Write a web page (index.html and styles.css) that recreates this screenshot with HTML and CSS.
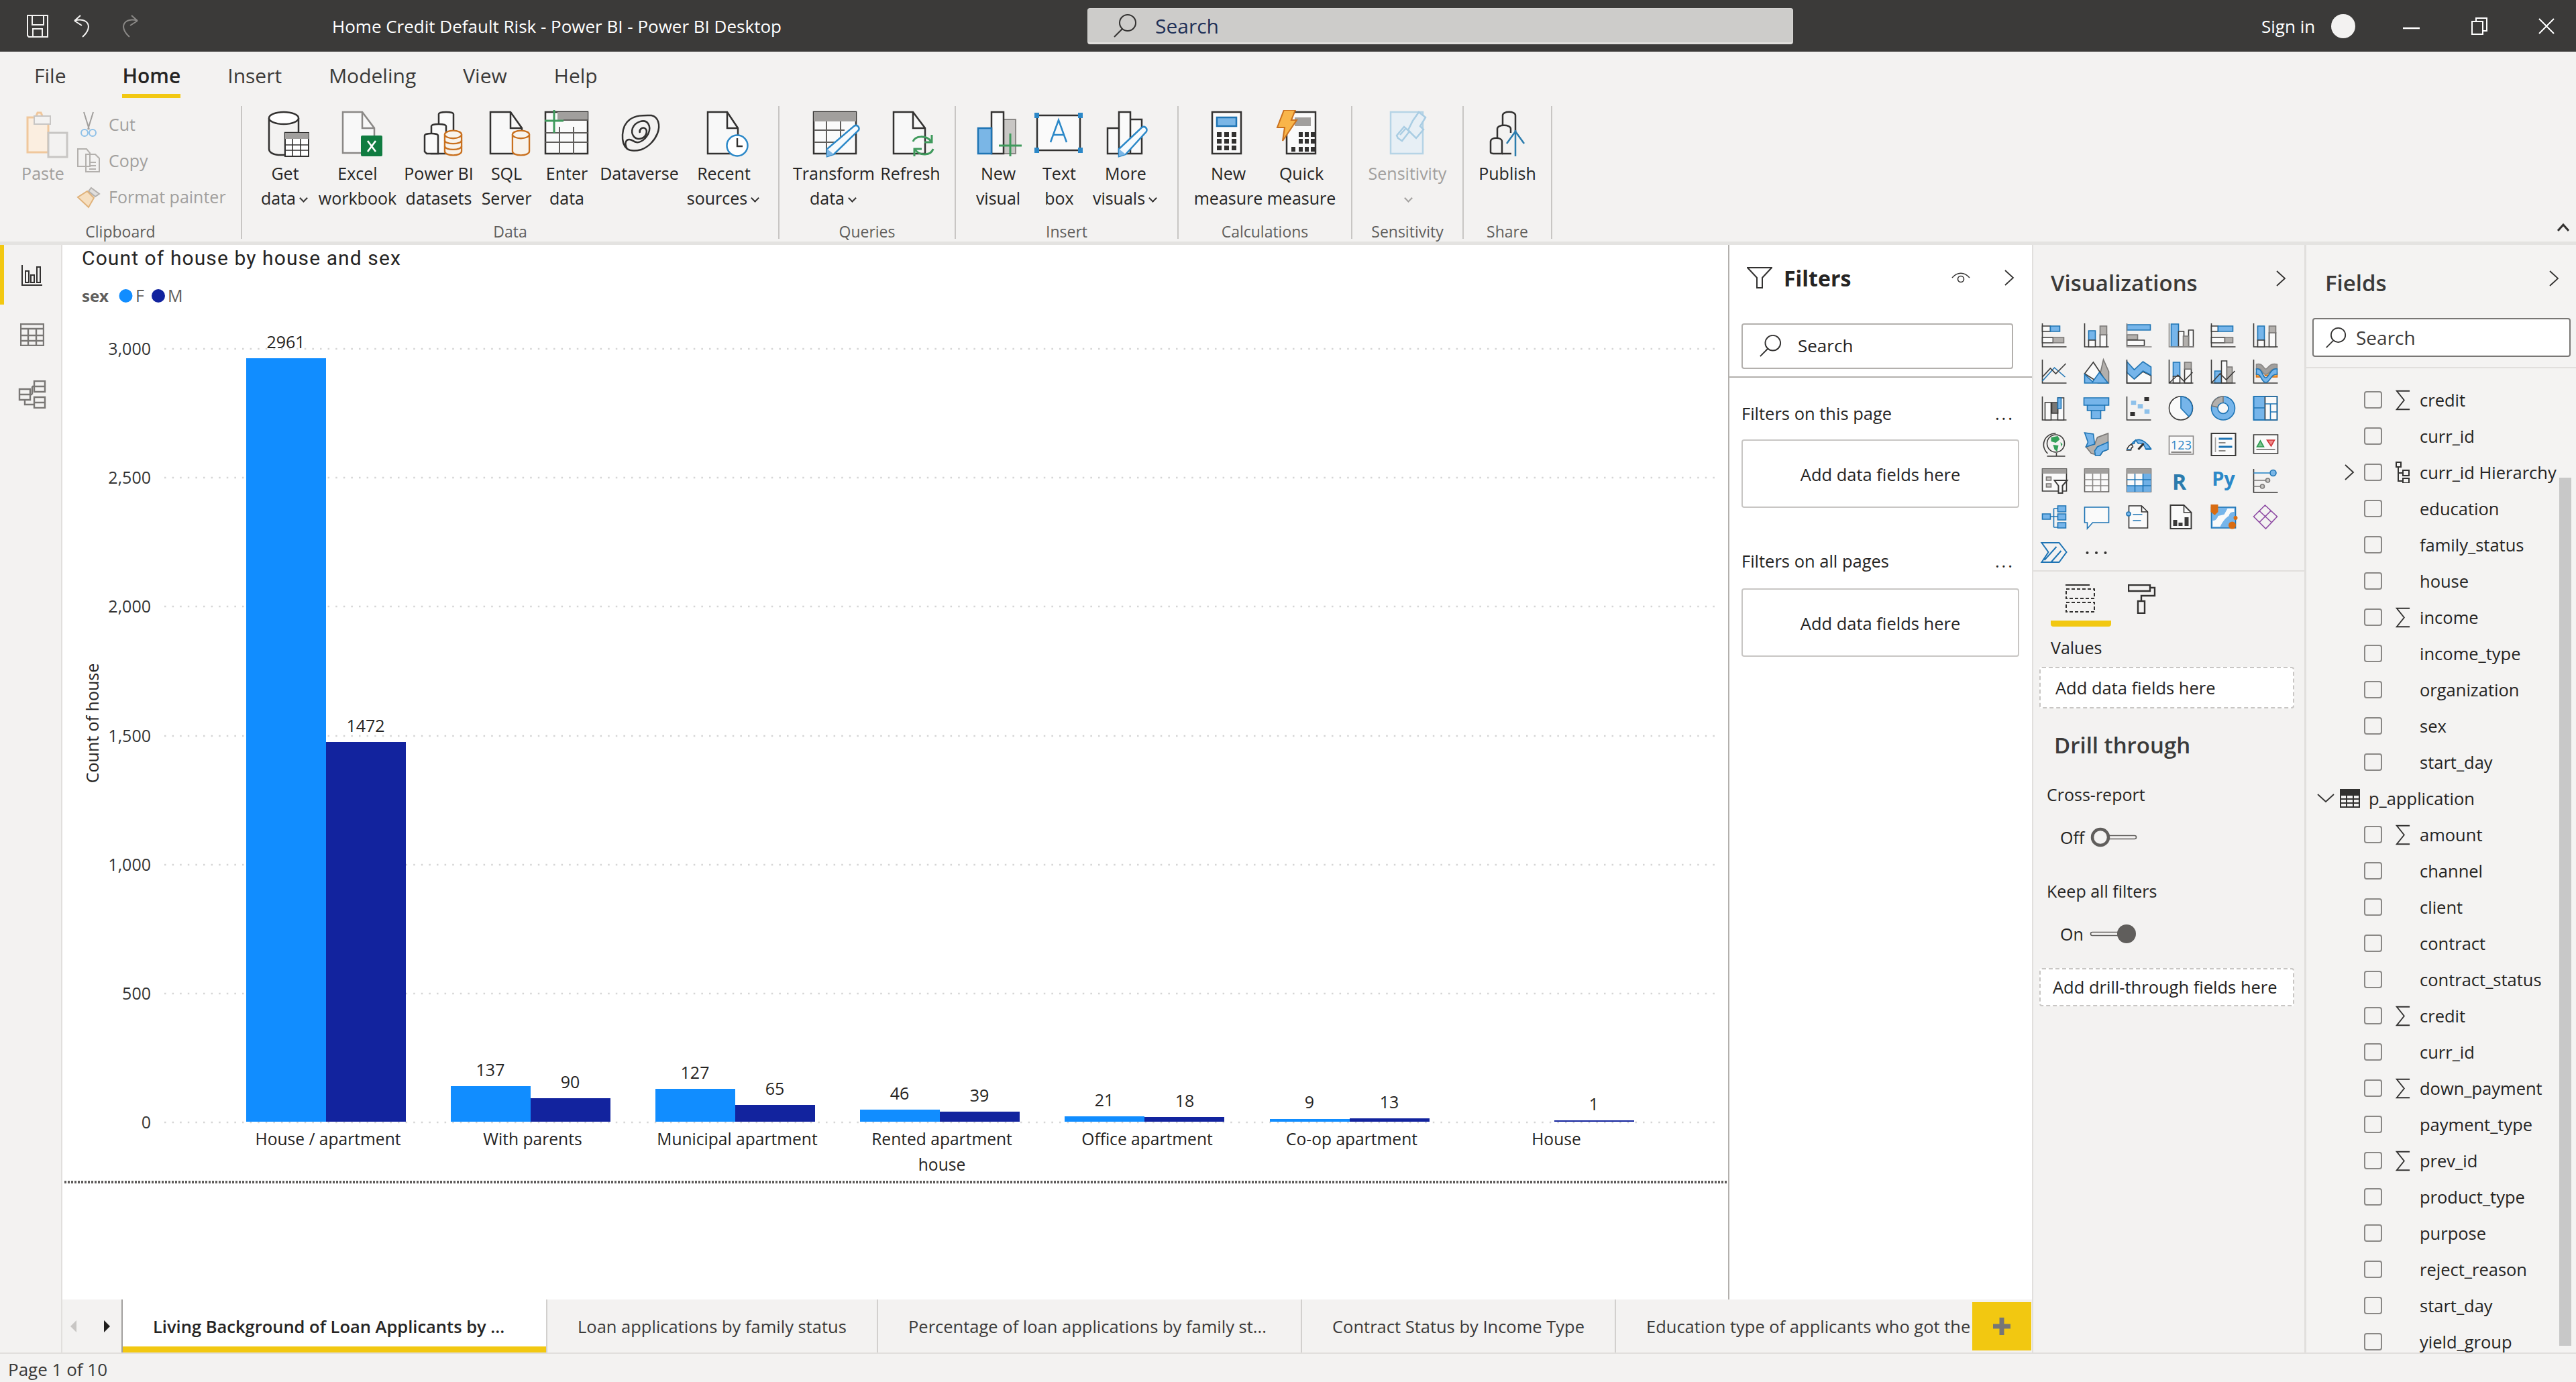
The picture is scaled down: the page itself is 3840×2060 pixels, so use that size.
FILE: index.html
```html
<!DOCTYPE html>
<html lang="en">
<head>
<meta charset="utf-8">
<title>Home Credit Default Risk - Power BI - Power BI Desktop</title>
<link rel="stylesheet" href="styles.css">
</head>
<body>
<svg class="defs">
  <symbol id="search" viewBox="0 0 36 36"><circle cx="22" cy="14" r="12" fill="none" stroke="currentColor" stroke-width="2"/><path d="M14 23L2 35" fill="none" stroke="currentColor" stroke-width="2"/></symbol>
  <symbol id="chev" viewBox="0 0 16 26"><path d="M2 2l12 11L2 24" fill="none" stroke="currentColor" stroke-width="1.8"/></symbol>
  <symbol id="sum" viewBox="0 0 24 34"><path d="M23 2H2l12 15L2 32h21" fill="none" stroke="#323130" stroke-width="2"/></symbol>
  <symbol id="cyl" viewBox="0 0 30 42"><path d="M2 8v26c0 8 26 8 26 0V8" fill="#f8f3ec" stroke="#c9701e" stroke-width="2.4"/><ellipse cx="15" cy="8" rx="13" ry="6" fill="#f8f3ec" stroke="#c9701e" stroke-width="2.4"/></symbol>
  <symbol id="stack" viewBox="0 0 30 42"><path d="M2 8v26c0 8 26 8 26 0V8" fill="#f8f3ec" stroke="#c9701e" stroke-width="2.4"/><ellipse cx="15" cy="8" rx="13" ry="6" fill="#f8f3ec" stroke="#c9701e" stroke-width="2.4"/><path d="M2 17c0 7 26 7 26 0M2 26c0 7 26 7 26 0" fill="none" stroke="#c9701e" stroke-width="2.4"/></symbol>
</svg>

<div class="app">
  <header class="titlebar">
    <div class="qat">
      <svg class="q1" width="32" height="34" viewBox="0 0 32 34"><path d="M1 1h30v32H3l-2-2zM8 1v14h17V1M9 33V21h14v12" fill="none" stroke="#f3f2f1" stroke-width="2"/></svg>
      <svg width="32" height="34" viewBox="0 0 32 34"><path d="M3 9l9-8M3 9l11 7M3 9c18-6 30 8 12 24" fill="none" stroke="#f3f2f1" stroke-width="2"/></svg>
      <svg width="32" height="34" viewBox="0 0 32 34"><path d="M29 9l-9-8M29 9L18 16M29 9C11 3-1 17 17 33" fill="none" stroke="#8a8886" stroke-width="2"/></svg>
    </div>
    <div class="doc-title">Home Credit Default Risk - Power BI - Power BI Desktop</div>
    <div class="top-search">
      <svg class="top-search-ic" width="36" height="36"><use href="#search"/></svg>
      <span>Search</span>
    </div>
    <div class="win">
      <span class="signin">Sign in</span>
      <span class="avatar"></span>
      <svg class="min" width="25" height="4" viewBox="0 0 25 4"><path d="M0 2h25" stroke="#fff" stroke-width="2.5"/></svg>
      <svg class="rest" width="24" height="26" viewBox="0 0 24 26"><path d="M7 5V1h16v19h-5M1 6h16v19H1z" fill="none" stroke="#fff" stroke-width="2"/></svg>
      <svg class="close" width="24" height="24" viewBox="0 0 24 24"><path d="M1 1l22 22M23 1L1 23" stroke="#fff" stroke-width="2"/></svg>
    </div>
  </header>

  <nav class="menu">
    <span class="mi">File</span>
    <span class="mi active">Home</span>
    <span class="mi">Insert</span>
    <span class="mi">Modeling</span>
    <span class="mi">View</span>
    <span class="mi">Help</span>
  </nav>

  <section class="ribbon">
    <div class="grp g-clip">
      <div class="btns">
        <div class="rb dis w100">
          <svg class="ri" width="80" height="72" viewBox="0 0 80 72"><path d="M17 11h12l3-7 5 0 3 7h8v52H17z" fill="#fbeee0" stroke="#f0c79c" stroke-width="3"/><path d="M27 9h24v12H27z" fill="#f3f2f1" stroke="#c8c6c4" stroke-width="2"/><path d="M48 34h28v36H48z" fill="#f3f2f1" stroke="#c8c6c4" stroke-width="3"/></svg>
          <div class="rl">Paste</div>
        </div>
        <div class="smalls">
          <div class="sm"><svg width="26" height="38" viewBox="0 0 26 38"><path d="M6 1l8 26M20 1L12 27" fill="none" stroke="#a19f9d" stroke-width="2"/><circle cx="7" cy="32" r="5" fill="none" stroke="#8fc1e8" stroke-width="2"/><circle cx="19" cy="32" r="5" fill="none" stroke="#8fc1e8" stroke-width="2"/></svg><span>Cut</span></div>
          <div class="sm"><svg width="34" height="36" viewBox="0 0 34 36"><path d="M1 1h13l5 6v20H1zM13 9h14l6 6v20H13z" fill="#f3f2f1" stroke="#b3b0ad" stroke-width="2"/><path d="M18 21h10M18 26h10M18 31h10" stroke="#b3b0ad" stroke-width="2"/></svg><span>Copy</span></div>
          <div class="sm"><svg width="36" height="36" viewBox="0 0 36 36"><path d="M22 5l12 9-6 4-10-8z" fill="#e1dfdd" stroke="#b3b0ad" stroke-width="2"/><path d="M16 10l10 10-8 14L2 19z" fill="#f6dfc0" stroke="#e0b27a" stroke-width="2"/></svg><span>Format painter</span></div>
        </div>
      </div>
      <div class="gl">Clipboard</div>
    </div>

    <div class="grp g-data">
      <div class="btns">
        <div class="rb w110">
          <svg class="ri" width="80" height="72" viewBox="0 0 80 72"><path d="M16 12v46c0 5 6 8 14 9h10V34h20V12" fill="#f3f2f1" stroke="#323130" stroke-width="2.5"/><ellipse cx="38" cy="12" rx="22" ry="9" fill="#fff" stroke="#323130" stroke-width="2.5"/><path d="M40 34h35v35H40z" fill="#fff" stroke="#323130" stroke-width="2"/><path d="M40 34h35v9H40z" fill="#a19f9d"/><path d="M51 43v26M63 43v26M40 52h35M40 60h35" stroke="#323130" stroke-width="1.6"/></svg>
          <div class="rl">Get</div><div class="rl">data<i class="caret"></i></div>
        </div>
        <div class="rb w106">
          <svg class="ri" width="80" height="72" viewBox="0 0 80 72"><path d="M18 3h29l18 24v37H18z" fill="#f8f8f8" stroke="#8a8886" stroke-width="2.5"/><path d="M47 3v24h18" fill="none" stroke="#8a8886" stroke-width="2.5"/><rect x="45" y="38" width="32" height="31" rx="2" fill="#107c41"/><path d="M55 46l12 16M67 46L55 62" stroke="#fff" stroke-width="2.6"/></svg>
          <div class="rl">Excel</div><div class="rl">workbook</div>
        </div>
        <div class="rb w136">
          <svg class="ri" width="80" height="72" viewBox="0 0 80 72"><path d="M40 65V6c0-4 22-4 22 0v34" fill="#fafafa" stroke="#323130" stroke-width="2.5"/><path d="M29 65V24c0-4 22-4 22 0v41z" fill="#fafafa" stroke="#323130" stroke-width="2.5"/><path d="M19 62V38c0-4 20-4 20 0v27H22z" fill="#fafafa" stroke="#323130" stroke-width="2.5"/><svg x="47" y="28" width="29" height="42"><use href="#stack"/></svg></svg>
          <div class="rl">Power BI</div><div class="rl">datasets</div>
        </div>
        <div class="rb w66">
          <svg class="ri" width="80" height="72" viewBox="0 0 80 72"><path d="M16 3h30l17 24v38H16z" fill="#f8f8f8" stroke="#323130" stroke-width="2.5"/><path d="M46 3v24h17" fill="none" stroke="#323130" stroke-width="2.5"/><svg x="47" y="28" width="29" height="42"><use href="#cyl"/></svg></svg>
          <div class="rl">SQL</div><div class="rl">Server</div>
        </div>
        <div class="rb w114">
          <svg class="ri" width="80" height="72" viewBox="0 0 80 72"><path d="M8 3h63v62H8z" fill="#fafafa" stroke="#323130" stroke-width="2.5"/><path d="M26 3h45v12H26z" fill="#a19f9d"/><path d="M29 25v40M50 25v40M8 34h63M8 48h63M35 15h36" stroke="#605e5c" stroke-width="2"/><path d="M21 0v34M7 16h28" stroke="#3f9a5c" stroke-width="3"/></svg>
          <div class="rl">Enter</div><div class="rl">data</div>
        </div>
        <div class="rb w102">
          <svg class="ri" width="80" height="72" viewBox="0 0 80 72"><path d="M22 58C12 50 12 24 26 14c10-7 22-6 32-6 10 2 14 14 9 27-4 10-13 20-24 24-8 2-15 3-21-1zM22 58c-5-8-2-14 3-14 6 0 9 7 17 3 10-5 17-18 11-27-5-7-19-3-23 7-3 9 3 19 14 15 7-3 9-12 4-15-4-2-9 3-7 7" fill="none" stroke="#323130" stroke-width="2.5"/></svg>
          <div class="rl">Dataverse</div>
        </div>
        <div class="rb w150">
          <svg class="ri" width="80" height="72" viewBox="0 0 80 72"><path d="M16 3h29l16 24v38H16z" fill="#f8f8f8" stroke="#323130" stroke-width="2.5"/><path d="M45 3v24h16" fill="none" stroke="#323130" stroke-width="2.5"/><circle cx="60" cy="53" r="15.5" fill="#fff" stroke="#2b88c8" stroke-width="2.5"/><path d="M60 42v12h8" fill="none" stroke="#323130" stroke-width="2.4"/></svg>
          <div class="rl">Recent</div><div class="rl">sources<i class="caret"></i></div>
        </div>
      </div>
      <div class="gl">Data</div>
    </div>

    <div class="grp g-query">
      <div class="btns">
        <div class="rb w146">
          <svg class="ri" width="80" height="72" viewBox="0 0 80 72"><path d="M10 3h63v62H10z" fill="#fafafa" stroke="#323130" stroke-width="2.5"/><path d="M10 3h63v14H10z" fill="#a19f9d"/><path d="M29 17v48M50 17v30M10 30h46M10 48h36" stroke="#605e5c" stroke-width="2"/><path d="M70 24c4-3 9 1 7 6L40 66l-10 3 0-11z" fill="#f6fafd" stroke="#2b88c8" stroke-width="2.5"/><path d="M30 58l10 8-10 3z" fill="#7ab6e6"/></svg>
          <div class="rl">Transform</div><div class="rl">data<i class="caret"></i></div>
        </div>
        <div class="rb w82">
          <svg class="ri" width="80" height="72" viewBox="0 0 80 72"><path d="M15 3h29l18 24v38H15z" fill="#f8f8f8" stroke="#323130" stroke-width="2.5"/><path d="M44 3v24h18" fill="none" stroke="#323130" stroke-width="2.5"/><path d="M44 47c3-9 20-10 27 0M74 58c-3 10-20 11-27 1" fill="none" stroke="#3f9a5c" stroke-width="3"/><path d="M72 37v11H61M46 69V58h11" fill="none" stroke="#3f9a5c" stroke-width="3"/></svg>
          <div class="rl">Refresh</div>
        </div>
      </div>
      <div class="gl">Queries</div>
    </div>

    <div class="grp g-insert">
      <div class="btns">
        <div class="rb w102">
          <svg class="ri" width="80" height="72" viewBox="0 0 80 72"><path d="M48 14h18v51H48z" fill="#c8c6c4" stroke="#8a8886" stroke-width="2"/><path d="M30 3h18v62H30z" fill="#fafafa" stroke="#323130" stroke-width="2.5"/><path d="M10 27h20v38H10z" fill="#7ab6e6" stroke="#1e74b4" stroke-width="2.5"/><path d="M58 35v34M41 53h34" stroke="#3f9a5c" stroke-width="3"/></svg>
          <div class="rl">New</div><div class="rl">visual</div>
        </div>
        <div class="rb w80">
          <svg class="ri" width="80" height="72" viewBox="0 0 80 72"><path d="M7 8h64v52H7z" fill="#fafafa" stroke="#323130" stroke-width="2.5"/><path d="M3 4h7v8H3zM68 4h7v8h-7zM3 56h7v8H3zM68 56h7v8h-7z" fill="#2b88c8"/><path d="M27 48l12-33 12 33M31 37h16" fill="none" stroke="#2b88c8" stroke-width="2.5"/></svg>
          <div class="rl">Text</div><div class="rl">box</div>
        </div>
        <div class="rb w118">
          <svg class="ri" width="80" height="72" viewBox="0 0 80 72"><path d="M13 27h17v38H13zM30 3h17v62H30zM47 14h17v51H47z" fill="#fafafa" stroke="#323130" stroke-width="2.5"/><path d="M64 26c4-3 9 1 7 6L40 66l-10 3 0-11z" fill="#f6fafd" stroke="#2b88c8" stroke-width="2.5"/><path d="M30 58l10 8-10 3z" fill="#7ab6e6"/></svg>
          <div class="rl">More</div><div class="rl">visuals<i class="caret"></i></div>
        </div>
      </div>
      <div class="gl">Insert</div>
    </div>

    <div class="grp g-calc">
      <div class="btns">
        <div class="rb w110">
          <svg class="ri" width="80" height="72" viewBox="0 0 80 72"><path d="M16 3h43v62H16z" fill="#fafafa" stroke="#323130" stroke-width="2.5"/><path d="M23 11h29v13H23z" fill="#7ab6e6" stroke="#1e74b4" stroke-width="2.5"/><path d="M23 35h7v7h-7zM34 35h7v7h-7zM45 35h7v7h-7zM23 45h7v7h-7zM34 45h7v7h-7zM45 45h7v7h-7zM23 55h7v7h-7zM34 55h7v7h-7zM45 55h7v7h-7z" fill="#323130" transform="translate(0 -2)"/></svg>
          <div class="rl">New</div><div class="rl">measure</div>
        </div>
        <div class="rb w108">
          <svg class="ri" width="80" height="72" viewBox="0 0 80 72"><path d="M18 3h43v62H18z" fill="#fafafa" stroke="#323130" stroke-width="2.5"/><path d="M30 11h24v13H30z" fill="#a19f9d"/><path d="M36 33h6v7h-6zM45 33h6v7h-6zM54 33h6v7h-6zM36 43h6v7h-6zM45 43h6v7h-6zM54 43h6v7h-6zM25 55h6v7h-6zM36 55h6v7h-6zM45 55h6v7h-6zM54 55h6v7h-6z" fill="#323130"/><path d="M14 0h17l-6 15h8L12 46l3-20H4z" fill="#f9b54a" stroke="#c9701e" stroke-width="2"/></svg>
          <div class="rl">Quick</div><div class="rl">measure</div>
        </div>
      </div>
      <div class="gl">Calculations</div>
    </div>

    <div class="grp g-sens">
      <div class="btns">
        <div class="rb dis w165">
          <svg class="ri" width="80" height="72" viewBox="0 0 80 72"><path d="M15 3h48v62H15z" fill="#e7eff5" stroke="#b6d4e6" stroke-width="2.5"/><path d="M48 16l9-13 10 8-8 13 5 5-11 13-12-12z" fill="#e7eff5" stroke="#a9cde3" stroke-width="2.5"/><path d="M24 38l11-13 8 7-11 14-6-4zM29 37l9-10" fill="none" stroke="#a9cde3" stroke-width="2.5"/></svg>
          <div class="rl">Sensitivity</div><div class="rl"><i class="caret"></i></div>
        </div>
      </div>
      <div class="gl">Sensitivity</div>
    </div>

    <div class="grp g-share">
      <div class="btns">
        <div class="rb w130">
          <svg class="ri" width="80" height="72" viewBox="0 0 80 72"><path d="M15 63V47c0-7 17-7 17 0v18H19c-2 0-4-1-4-2z" fill="none" stroke="#323130" stroke-width="2.5"/><path d="M25 42V28c0-7 20-7 20 0v6" fill="none" stroke="#323130" stroke-width="2.5"/><path d="M33 24V8c0-7 19-7 19 0v26" fill="none" stroke="#323130" stroke-width="2.5"/><path d="M32 65h14" stroke="#323130" stroke-width="2.5"/><path d="M52 69V30M39 50l13-18 13 18" fill="none" stroke="#2b7cad" stroke-width="2.5"/></svg>
          <div class="rl">Publish</div>
        </div>
      </div>
      <div class="gl">Share</div>
    </div>
    <svg class="collapse" width="18" height="12" viewBox="0 0 18 12"><path d="M1 11l8-9 8 9" fill="none" stroke="#323130" stroke-width="3"/></svg>
  </section>

  <main class="main">
    <aside class="nav">
      <div class="nav-item on"><svg width="32" height="32" viewBox="0 0 32 32"><path d="M1 1v30h30" fill="none" stroke="#323130" stroke-width="2"/><path d="M6 10h5v17H6zM14 16h5v11h-5zM23 4h5v23h-5z" fill="none" stroke="#323130" stroke-width="2"/></svg></div>
      <div class="nav-item"><svg width="36" height="34" viewBox="0 0 36 34"><path d="M1 1h34v32H1zM1 8h34M1 18h34M1 26h34M12 8v25M24 8v25" fill="none" stroke="#797775" stroke-width="2.4"/></svg></div>
      <div class="nav-item"><svg width="42" height="42" viewBox="0 0 42 42"><path d="M24 1h16v16H24zM24 9h16M2 13h16v16H2zM2 21h16M24 25h16v16H24zM24 33h16M18 21h3M21 9h3M21 9v12M10 29v7h14" fill="none" stroke="#797775" stroke-width="2.4"/></svg></div>
    </aside>

    <div class="center">
      <div class="work">
        <div class="canvas">
          <svg class="chart" width="2483" height="1572" viewBox="93 365 2483 1572">
            <text class="c-title" x="122" y="395">Count of house by house and sex</text>
            <text class="c-legt" x="122" y="450">sex</text>
            <circle cx="187.500" cy="441" r="10" fill="#118dff"/><text class="c-leg" x="202" y="450">F</text>
            <circle cx="236" cy="441" r="10" fill="#12239e"/><text class="c-leg" x="250" y="450">M</text>

            <g class="grid">
              <path d="M245 520H2560"/><path d="M245 712H2560"/><path d="M245 904H2560"/><path d="M245 1097H2560"/><path d="M245 1289H2560"/><path d="M245 1481H2560"/><path d="M245 1673H2560"/>
            </g>
            <g class="lab end">
              <text x="225" y="529">3,000</text><text x="225" y="721">2,500</text><text x="225" y="913">2,000</text><text x="225" y="1106">1,500</text><text x="225" y="1298">1,000</text><text x="225" y="1490">500</text><text x="225" y="1682">0</text>
            </g>
            <text class="lab" transform="translate(147 1078) rotate(-90)" text-anchor="middle">Count of house</text>

            <g fill="#118dff">
              <rect x="367" y="534" width="119" height="1138"/><rect x="672" y="1619" width="119" height="53"/><rect x="977" y="1623" width="119" height="49"/><rect x="1282" y="1654" width="119" height="18"/><rect x="1587" y="1664" width="119" height="8"/><rect x="1893" y="1668" width="119" height="4"/>
            </g>
            <g fill="#12239e">
              <rect x="486" y="1106" width="119" height="566"/><rect x="791" y="1637" width="119" height="35"/><rect x="1096" y="1647" width="119" height="25"/><rect x="1401" y="1657" width="119" height="15"/><rect x="1706" y="1665" width="119" height="7"/><rect x="2012" y="1667" width="119" height="5"/><rect x="2317" y="1670" width="119" height="2"/>
            </g>
            <g class="lab mid">
              <text x="426" y="519">2961</text><text x="545" y="1091">1472</text>
              <text x="731" y="1604">137</text><text x="850" y="1622">90</text>
              <text x="1036" y="1608">127</text><text x="1155" y="1632">65</text>
              <text x="1341" y="1639">46</text><text x="1460" y="1642">39</text>
              <text x="1646" y="1649">21</text><text x="1766" y="1650">18</text>
              <text x="1952" y="1652">9</text><text x="2071" y="1652">13</text>
              <text x="2376" y="1655">1</text>
            </g>
            <g class="axl mid">
              <text x="489" y="1707">House / apartment</text>
              <text x="794" y="1707">With parents</text>
              <text x="1099" y="1707">Municipal apartment</text>
              <text x="1404" y="1707">Rented apartment</text>
              <text x="1710" y="1707">Office apartment</text>
              <text x="2015" y="1707">Co-op apartment</text>
              <text x="2320" y="1707">House</text>
              <text x="1404" y="1745">house</text>
            </g>
            <path class="dots" d="M96 1762H2576"/>
          </svg>
        </div>

        <aside class="filters">
          <div class="f-head">
            <svg class="f-ic" width="38" height="32" viewBox="0 0 38 32"><path d="M1 1h36L23 16v15h-8V16z" fill="none" stroke="#323130" stroke-width="2"/></svg>
            <span class="f-title">Filters</span>
            <svg class="f-eye" width="28" height="16" viewBox="0 0 28 16"><path d="M1 8c8-9 18-9 26 0" fill="none" stroke="#323130" stroke-width="1.6"/><circle cx="14" cy="10" r="4.500" fill="none" stroke="#323130" stroke-width="1.6"/></svg>
            <svg class="f-chev" width="16" height="26" color="#323130"><use href="#chev"/></svg>
          </div>
          <div class="f-search">
            <svg width="34" height="34" color="#323130"><use href="#search"/></svg>
            <span>Search</span>
          </div>
          <div class="f-sec first"><span>Filters on this page</span><span class="dots3">...</span></div>
          <div class="f-box">Add data fields here</div>
          <div class="f-sec"><span>Filters on all pages</span><span class="dots3">...</span></div>
          <div class="f-box">Add data fields here</div>
        </aside>
      </div>

      <div class="tabs">
        <div class="tab-nav">
          <svg width="12" height="20" viewBox="0 0 12 20"><path d="M11 1L2 10l9 9z" fill="#c8c6c4"/></svg>
          <svg width="12" height="20" viewBox="0 0 12 20"><path d="M1 1l9 9-9 9z" fill="#201f1e"/></svg>
        </div>
        <div class="tab t1 on">Living Background of Loan Applicants by ...</div>
        <div class="tab t2">Loan applications by family status</div>
        <div class="tab t3">Percentage of loan applications by family st...</div>
        <div class="tab t4">Contract Status by Income Type</div>
        <div class="tab t5">Education type of applicants who got the</div>
        <div class="tab-add"><svg width="26" height="26" viewBox="0 0 26 26"><path d="M13 0v26M0 13h26" stroke="#767676" stroke-width="7"/></svg></div>
      </div>
    </div>

    <aside class="viz">
      <div class="p-head"><span class="p-title">Visualizations</span><svg class="p-chev" width="16" height="26" color="#323130"><use href="#chev"/></svg></div>
      <div class="vgrid">
        <svg class="vi" viewBox="0 0 37 37"><path d="M1 1V36H37"/><path class="wh" d="M1 5h12v8H1zM1 22h16v8H1z"/><path class="bl" d="M13 5h14v8H13z"/><path class="gr" d="M17 22h16v8H17z"/></svg>
        <svg class="vi" viewBox="0 0 37 37"><path d="M1 1V36H37"/><path class="bl" d="M7 12h10v14H7z"/><path class="wh" d="M7 26h10v10H7zM24 18h10v18H24z"/><path class="gr" d="M24 5h10v13H24z"/></svg>
        <svg class="vi" viewBox="0 0 37 37"><path class="bl" d="M1 3h35v8H1z"/><path class="gr" d="M1 18h16v7H1z"/><path class="wh" d="M1 26h26v8H1z"/><path stroke="#8a8886" d="M1 1V36H38"/></svg>
        <svg class="vi" viewBox="0 0 37 37"><path class="bl" d="M4 2h11v34H4z"/><path class="wh" d="M15 13h8v23h-8zM30 11h7v25h-7z"/><path class="gr" d="M22 20h8v16h-8z"/><path stroke="#8a8886" d="M1 1V36H38"/></svg>
        <svg class="vi" viewBox="0 0 37 37"><path d="M1 1V36H37"/><path class="wh" d="M1 5h10v8H1zM1 22h20v8H1z"/><path class="bl" d="M11 5h22v8H11z"/><path class="gr" d="M21 22h12v8H21z"/></svg>
        <svg class="vi" viewBox="0 0 37 37"><path d="M1 1V36H37"/><path class="bl" d="M7 5h10v21H7z"/><path class="wh" d="M7 26h10v10H7zM24 15h10v21H24z"/><path class="gr" d="M24 5h10v10H24z"/></svg>

        <svg class="vi" viewBox="0 0 37 37"><path d="M1 1V36H37"/><path class="st" d="M1 33L19 13l16 14"/><path d="M1 27L13 14l8 8 15-15"/></svg>
        <svg class="vi" viewBox="0 0 37 37"><path class="gr" d="M21 36L29 1l8 18v17z"/><path class="wh" d="M1 22L14 5l14 21-8 8z"/><path class="bl" d="M1 36V23l12 11 10-14 13 16z"/></svg>
        <svg class="vi" viewBox="0 0 37 37"><path class="wh" d="M1 20l11 10 13-11 12 6v11H1z"/><path class="bl" d="M1 4l11 12 13-12 12 8v12l-12-6-13 12L1 20z"/><path d="M1 1V36H37"/></svg>
        <svg class="vi" viewBox="0 0 37 37"><path class="bl" d="M7 5h10v21H7z"/><path class="wh" d="M7 26h10v10H7zM24 15h10v21H24z"/><path class="gr" d="M24 5h10v10H24z"/><path d="M1 1V36H37M1 36l13-12 9 9 13-13"/></svg>
        <svg class="vi" viewBox="0 0 37 37"><path class="bl" d="M6 18h10v18H6z"/><path class="wh" d="M16 3h8v33h-8z"/><path class="gr" d="M24 12h8v24h-8z"/><path d="M1 1V36H37M1 36l13-14 9 9 13-13"/></svg>
        <svg class="vi" viewBox="0 0 37 37"><path d="M1 1V36H37"/><path class="or" d="M5 21h8v6H5zM18 19h7v6h-7zM28 21h8v6h-8z"/><path fill="#a19f9d" stroke="#8a8886" d="M5 8c9-3 11 7 14 7s6-10 17-7v7c-10-2-11 8-17 8S14 12 5 15z"/><path class="bl" d="M5 15c9-2 9 13 14 13s7-15 17-13v8c-10-1-10 12-17 12S13 22 5 23z"/></svg>

        <svg class="vi" viewBox="0 0 37 37"><path d="M1 1V36H37"/><path class="wh" d="M5 10h9v26H5zM24 3h9v33h-9z"/><path fill="#797775" d="M15 10h9v16h-9z"/><path class="bl" d="M24 3h5v16h-5z"/></svg>
        <svg class="vi" viewBox="0 0 37 37"><path class="bl" d="M0 3h37v11h-6v8h-6v12H11V22H5v-8H0z"/><path class="bl" d="M5 14h26M10 22h16"/></svg>
        <svg class="vi" viewBox="0 0 37 37"><path d="M1 1V36H37"/><path fill="#323130" stroke="none" d="M27 2h7v6h-7zM6 24h7v6H6z"/><path fill="#8ec1ea" stroke="#8ec1ea" d="M8 8h6v5H8zM18 13h6v5h-6zM28 21h6v5h-6z"/></svg>
        <svg class="vi" viewBox="0 0 37 37"><circle class="wh" cx="18.500" cy="18.500" r="17.500"/><path class="bl" d="M18.500 1a17.500 17.500 0 0 1 12 30L18.500 18.500z"/></svg>
        <svg class="vi" viewBox="0 0 37 37"><circle class="bl" cx="18.500" cy="18.500" r="17.500"/><path class="gr" d="M18.500 1a17.500 17.500 0 0 0-17 14l9 2a8 8 0 0 1 8-6z"/><circle class="whb" cx="18.500" cy="18.500" r="8"/></svg>
        <svg class="vi" viewBox="0 0 37 37"><path class="bl" d="M1 1h17v35H1z"/><path class="wh" d="M18 1h18v35H18z"/><path class="st" d="M1 18h17M18 12h18M26 12v24M26 24h10M18 1h18v35H1V1z"/></svg>

        <svg class="vi" viewBox="0 0 37 37"><path stroke="#3b3a39" d="M21 2a17 17 0 0 0-12 30M8 36h27M22 31v5"/><circle fill="#f3f2f1" stroke="#3b3a39" cx="21" cy="17" r="13"/><path fill="#33a058" stroke="none" d="M14 8l10-2 3 5-6 5-7-2zM17 19l8 1-2 9-4-3zM28 15l3 3-2 4z"/></svg>
        <svg class="vi" viewBox="0 0 37 37"><path class="gr" d="M3 22l13-4 4-10 16-6v24l-8 3-4 6-4-1-9-2z"/><path class="bl" d="M1 1l13 2 2 15-13 4 3-7zM20 22l16-7v11l-8 3-4 6h-7l-1-7z"/></svg>
        <svg class="vi" viewBox="0 0 37 37"><path class="bl" d="M8 18C13 10 24 6 37 25v0h-8c-2-6-6-9-11-8l-4-5-2 5z"/><path class="wh" d="M1 27c1-5 3-7 7-9l2 4c-2 1-3 3-3 5z"/><path class="st" d="M1 26h6M29 26h8"/><path stroke="#323130" stroke-width="3" d="M18 26l8-9"/></svg>
        <svg class="vi" viewBox="0 0 37 37"><path stroke="#8a8886" fill="#fafafa" d="M1 6h36v27H1z"/><path stroke="#8a8886" stroke-width="2" d="M4 30h30"/><text class="v123" x="19" y="26">123</text></svg>
        <svg class="vi" viewBox="0 0 37 37"><path fill="#fafafa" stroke-width="2" d="M1 2h36v33H1z"/><path stroke="#a19f9d" d="M7 8v22"/><path stroke="#1e74b4" stroke-width="3" d="M12 10h20M12 22h20"/><path stroke="#8a8886" stroke-width="2" d="M12 16h10M12 28h10"/></svg>
        <svg class="vi" viewBox="0 0 37 37"><path fill="#fafafa" d="M1 4h36v28H1z"/><path fill="#7cc48f" stroke="#2e9a50" d="M6 22l5-9 5 9z"/><path fill="#f08a8a" stroke="#d13438" d="M21 12h11l-5 9z"/><path stroke="#8a8886" stroke-width="2" d="M5 26h28"/></svg>

        <svg class="vi" viewBox="0 0 37 37"><path fill="#fafafa" d="M1 1h36v33H1z"/><path fill="#a19f9d" stroke="none" d="M1 1h36v7H1z"/><path fill="#c8c6c4" stroke="#797775" d="M7 13h7v5H7zM7 23h7v5H7z"/><path fill="#fafafa" stroke-width="2" d="M19 18h19l-7 8v11h-6V26z"/></svg>
        <svg class="vi" viewBox="0 0 37 37"><path fill="#fafafa" stroke="#605e5c" d="M1 1h36v34H1z"/><path fill="#a19f9d" stroke="none" d="M1 1h36v7H1z"/><path stroke="#8a8886" d="M13 8v27M25 8v27M1 17h36M1 26h36"/></svg>
        <svg class="vi" viewBox="0 0 37 37"><path fill="#fafafa" stroke="#605e5c" d="M1 1h36v34H1z"/><path fill="#a19f9d" stroke="none" d="M1 1h36v7H1z"/><path fill="#6fb0e6" stroke="none" d="M25 8h12v27H25zM1 26h24v9H1z"/><path stroke="#1e74b4" d="M13 8v27M25 8v27M1 17h36M1 26h36"/></svg>
        <svg class="vi" viewBox="0 0 37 37"><text class="vr" x="16" y="32">R</text></svg>
        <svg class="vi" viewBox="0 0 37 37"><text class="vp" x="19" y="26">Py</text></svg>
        <svg class="vi" viewBox="0 0 37 37"><path d="M1 1V36H37"/><path stroke="#2b88c8" d="M1 7h24"/><path stroke="#797775" d="M1 18h18M1 27h10"/><circle fill="#7ab6e6" stroke="#1e74b4" cx="30" cy="7" r="4.500"/><circle fill="#c8c6c4" stroke="#797775" cx="22" cy="18" r="3"/><circle fill="#c8c6c4" stroke="#797775" cx="14" cy="27" r="3"/></svg>

        <svg class="vi" viewBox="0 0 37 37"><path class="st" d="M18 18h-6M18 6v28M18 6h6M18 18h6M18 34h6"/><path class="bl" d="M1 14h12v8H1zM24 2h12v9H24zM24 14h12v9H24zM24 27h12v8H24z"/></svg>
        <svg class="vi" viewBox="0 0 37 37"><path class="st" fill="#fafafa" d="M1 4h36v23H13l-8 9v-9H1z"/></svg>
        <svg class="vi" viewBox="0 0 37 37"><path fill="#fafafa" stroke="#323130" d="M4 2h19l9 9v24H4z"/><path stroke="#323130" d="M23 2v9h9"/><circle class="bl" cx="3.500" cy="14" r="3"/><path class="st" d="M10 15h14M10 24h12"/></svg>
        <svg class="vi" viewBox="0 0 37 37"><path fill="#fafafa" stroke-width="2" d="M3 1h20l11 11v24H3z"/><path d="M23 1v11h11"/><path fill="#3b3a39" stroke="none" d="M7 23h6v9H7zM15 27h6v5h-6zM24 19h6v13h-6z"/></svg>
        <svg class="vi" viewBox="0 0 37 37"><path class="bl" d="M1 4h36v31H1z"/><path fill="#fafafa" stroke="none" d="M3 33V24c5 0 7-4 8-7l9-2 5-9h10v5c-5 0-7 2-8 6-5 3-9 8-13 16z"/><path fill="#d86c12" stroke="none" d="M0 0h11v11l-5 5-6-5z"/><circle cx="32" cy="31" r="5.500" fill="#d86c12" stroke="none"/><circle cx="37" cy="20" r="3" fill="#d86c12" stroke="none"/></svg>
        <svg class="vi" viewBox="0 0 37 37"><path stroke="#8d4aa3" d="M1 18L18 1l18 17-17 18zM10 10l18 17M27 9L10 26"/></svg>

        <svg class="vi" viewBox="0 0 37 37"><path class="st" stroke-width="2" d="M0 2h26l11 14-11 15H0l10-15zM14 31l15-17M4 28L22 8"/></svg>
        <svg class="vi" viewBox="0 0 37 37"><circle cx="5" cy="17" r="2" fill="#323130" stroke="none"/><circle cx="18.500" cy="17" r="2" fill="#323130" stroke="none"/><circle cx="32" cy="17" r="2" fill="#323130" stroke="none"/></svg>
      </div>
      <div class="v-tabs">
        <div class="v-tab on"><svg width="45" height="42" viewBox="0 0 45 42"><path d="M0 1h36" stroke="#323130" stroke-width="2"/><path d="M1 7h42v14H1zM1 27h42v14H1z" fill="none" stroke="#323130" stroke-width="2" stroke-dasharray="5 3"/></svg></div>
        <div class="v-tab"><svg width="42" height="44" viewBox="0 0 42 44"><path d="M1 1h32v9H1zM33 5h7v12H20v8M15 25h10v18H15z" fill="none" stroke="#323130" stroke-width="2.4"/></svg></div>
      </div>
      <div class="v-label">Values</div>
      <div class="drop">Add data fields here</div>
      <div class="v-h2">Drill through</div>
      <div class="v-sub">Cross-report</div>
      <div class="toggle"><span>Off</span><svg width="72" height="30" viewBox="0 0 72 30"><path d="M25 12.500h41a2.500 2.500 0 0 1 0 5H25z" fill="#f3f2f1" stroke="#605e5c" stroke-width="1.6"/><circle cx="15" cy="15" r="12" fill="#f3f2f1" stroke="#605e5c" stroke-width="4.500"/></svg></div>
      <div class="v-sub s2">Keep all filters</div>
      <div class="toggle"><span>On</span><svg width="72" height="30" viewBox="0 0 72 30"><path d="M4 12.500h50v5H4a2.500 2.500 0 0 1 0-5z" fill="#f3f2f1" stroke="#605e5c" stroke-width="1.6"/><circle cx="55" cy="15" r="14" fill="#605e5c"/></svg></div>
      <div class="drop d2">Add drill-through fields here</div>
    </aside>

    <aside class="fields">
      <div class="p-head fh"><span class="p-title">Fields</span><svg class="p-chev" width="16" height="26" color="#323130"><use href="#chev"/></svg></div>
      <div class="fsearch"><svg width="32" height="32" color="#323130"><use href="#search"/></svg><span>Search</span></div>
      <div class="flist">
        <div class="fr"><i class="ch"></i><i class="cb"></i><svg class="fi" width="22" height="33"><use href="#sum"/></svg><span>credit</span></div>
        <div class="fr"><i class="ch"></i><i class="cb"></i><i class="fi"></i><span>curr_id</span></div>
        <div class="fr"><i class="ch"><svg width="16" height="26" color="#323130"><use href="#chev"/></svg></i><i class="cb"></i><svg class="fi" width="22" height="32" viewBox="0 0 22 32"><path d="M1 1h7v7H1zM4 8v21h7M4 17h7M11 13h9v8h-9zM11 25h9v7h-9z" fill="none" stroke="#323130" stroke-width="2"/></svg><span>curr_id Hierarchy</span></div>
        <div class="fr"><i class="ch"></i><i class="cb"></i><i class="fi"></i><span>education</span></div>
        <div class="fr"><i class="ch"></i><i class="cb"></i><i class="fi"></i><span>family_status</span></div>
        <div class="fr"><i class="ch"></i><i class="cb"></i><i class="fi"></i><span>house</span></div>
        <div class="fr"><i class="ch"></i><i class="cb"></i><svg class="fi" width="22" height="33"><use href="#sum"/></svg><span>income</span></div>
        <div class="fr"><i class="ch"></i><i class="cb"></i><i class="fi"></i><span>income_type</span></div>
        <div class="fr"><i class="ch"></i><i class="cb"></i><i class="fi"></i><span>organization</span></div>
        <div class="fr"><i class="ch"></i><i class="cb"></i><i class="fi"></i><span>sex</span></div>
        <div class="fr"><i class="ch"></i><i class="cb"></i><i class="fi"></i><span>start_day</span></div>
        <div class="fr tbl"><svg class="tch" width="26" height="14" viewBox="0 0 26 14"><path d="M1 1l12 11L25 1" fill="none" stroke="#323130" stroke-width="1.800"/></svg><svg class="tic" width="30" height="28" viewBox="0 0 30 28"><path d="M1 1h28v26H1zM1 9h28M1 15h28M1 21h28M10 9v18M20 9v18" fill="none" stroke="#323130" stroke-width="2"/><path d="M1 1h28v8H1z" fill="#323130"/></svg><span>p_application</span></div>
        <div class="fr"><i class="ch"></i><i class="cb"></i><svg class="fi" width="22" height="33"><use href="#sum"/></svg><span>amount</span></div>
        <div class="fr"><i class="ch"></i><i class="cb"></i><i class="fi"></i><span>channel</span></div>
        <div class="fr"><i class="ch"></i><i class="cb"></i><i class="fi"></i><span>client</span></div>
        <div class="fr"><i class="ch"></i><i class="cb"></i><i class="fi"></i><span>contract</span></div>
        <div class="fr"><i class="ch"></i><i class="cb"></i><i class="fi"></i><span>contract_status</span></div>
        <div class="fr"><i class="ch"></i><i class="cb"></i><svg class="fi" width="22" height="33"><use href="#sum"/></svg><span>credit</span></div>
        <div class="fr"><i class="ch"></i><i class="cb"></i><i class="fi"></i><span>curr_id</span></div>
        <div class="fr"><i class="ch"></i><i class="cb"></i><svg class="fi" width="22" height="33"><use href="#sum"/></svg><span>down_payment</span></div>
        <div class="fr"><i class="ch"></i><i class="cb"></i><i class="fi"></i><span>payment_type</span></div>
        <div class="fr"><i class="ch"></i><i class="cb"></i><svg class="fi" width="22" height="33"><use href="#sum"/></svg><span>prev_id</span></div>
        <div class="fr"><i class="ch"></i><i class="cb"></i><i class="fi"></i><span>product_type</span></div>
        <div class="fr"><i class="ch"></i><i class="cb"></i><i class="fi"></i><span>purpose</span></div>
        <div class="fr"><i class="ch"></i><i class="cb"></i><i class="fi"></i><span>reject_reason</span></div>
        <div class="fr"><i class="ch"></i><i class="cb"></i><i class="fi"></i><span>start_day</span></div>
        <div class="fr"><i class="ch"></i><i class="cb"></i><i class="fi"></i><span>yield_group</span></div>
        <div class="scroll"></div>
      </div>
    </aside>
  </main>

  <footer class="status">Page 1 of 10</footer>
</div>
</body>
</html>
```

FILE: styles.css
```css
* { box-sizing: border-box; }
html, body { margin: 0; padding: 0; }
body { width: 3840px; height: 2060px; overflow: hidden; background: #f3f2f1; color: #252423; font-family: "Open Sans", "Noto Sans", sans-serif; font-size: 25px; }
.defs { display: none; }
i { font-style: normal; display: block; }
svg { display: block; flex: none; }
.app { display: flex; flex-direction: column; height: 2060px; }

/* title bar */
.titlebar { flex: none; height: 77px; background: #3b3a39; display: flex; align-items: center; color: #fff; }
.qat { width: 495px; padding-left: 40px; display: flex; gap: 36px; }
.doc-title { width: 1126px; font-size: 26px; white-space: nowrap; }
.top-search { width: 1052px; height: 54px; background: #cdccca; border: 1px solid #d6d5d3; border-bottom: 3px solid #e1dfdd; border-radius: 4px; display: flex; align-items: center; color: #1f3057; font-size: 30px; padding: 2px 0 0 37px; }
.top-search-ic { color: #323130; margin-right: 27px; margin-top: -2px; }
.win { flex: 1; display: flex; align-items: center; padding-left: 698px; }
.signin { font-size: 26px; width: 100px; white-space: nowrap; }
.avatar { width: 36px; height: 36px; border-radius: 50%; background: #f3f2f1; margin-left: 4px; }
.min { margin-left: 71px; margin-top: 6px; }
.rest { margin-left: 77px; }
.close { margin-left: 76px; }

/* menu */
.menu { flex: none; height: 69px; display: flex; gap: 70px; padding-left: 51px; font-size: 30px; color: #3b3a39; }
.mi { height: 69px; line-height: 40px; padding-top: 16px; padding-bottom: 7px; border-bottom: 6px solid transparent; }
.mi.active { font-weight: 600; color: #252423; border-bottom-color: #f2c811; margin-left: 14px; }

/* ribbon */
.ribbon { flex: none; height: 219px; position: relative; display: flex; align-items: flex-start; padding-top: 12px; border-bottom: 5px solid #e4e3e1; }
.grp { height: 198px; border-right: 2px solid #c8c6c4; display: flex; flex-direction: column; justify-content: space-between; flex: none; }
.g-clip { width: 361px; }
.g-data { width: 801px; }
.g-query { width: 263px; }
.g-insert { width: 332px; }
.g-calc { width: 259px; }
.g-sens { width: 166px; }
.g-share { width: 132px; }
.btns { display: flex; }
.g-clip .btns { padding-left: 14px; }
.g-data .btns { padding-left: 9px; }
.g-query .btns { padding-left: 8px; }
.g-insert .btns { padding-left: 12px; }
.g-calc .btns { padding-left: 19px; }
.gl { height: 22px; line-height: 22px; font-size: 23px; text-align: center; color: #605e5c; white-space: nowrap; }
.rb { display: flex; flex-direction: column; align-items: center; white-space: nowrap; flex: none; }
.ri { margin-top: 6px; margin-bottom: 4px; }
.rl { height: 36.5px; line-height: 36.5px; font-size: 25px; }
.dis { color: #a19f9d; }
.w66 { width: 66px; } .w80 { width: 80px; } .w82 { width: 82px; } .w100 { width: 100px; } .w102 { width: 102px; } .w106 { width: 106px; } .w108 { width: 108px; } .w110 { width: 110px; } .w114 { width: 114px; } .w118 { width: 118px; } .w130 { width: 130px; } .w136 { width: 136px; } .w146 { width: 146px; } .w150 { width: 150px; } .w165 { width: 164px; }
.caret { display: inline-block; width: 9px; height: 9px; border-right: 2px solid #323130; border-bottom: 2px solid #323130; transform: rotate(45deg); margin: 0 4px 5px 7px; }
.dis .caret { border-color: #a19f9d; }
.smalls { display: flex; flex-direction: column; color: #a19f9d; }
.sm { height: 54px; display: flex; align-items: center; gap: 12px; white-space: nowrap; font-size: 25px; width: 240px; }
.sm svg { width: 36px; }
.collapse { position: absolute; right: 10px; top: 187px; }

/* main */
.main { flex: 1; min-height: 0; display: flex; }
.nav { flex: none; width: 93px; border-right: 2px solid #e1dfdd; }
.nav-item { height: 89px; display: flex; align-items: center; justify-content: center; padding-right: 2px; border-left: 6px solid transparent; }
.nav-item.on { border-left-color: #f2c811; }
.center { flex: none; width: 2936px; display: flex; flex-direction: column; }
.work { flex: 1; min-height: 0; display: flex; }
.canvas { flex: none; width: 2483px; background: #fff; overflow: hidden; }
.chart text { font-family: "Open Sans", sans-serif; }
.chart .c-title { font-family: Roboto, sans-serif; font-size: 30px; letter-spacing: 1.1px; fill: #252423; }
.c-legt { font-size: 24px; font-weight: 700; fill: #605e5c; }
.c-leg { font-size: 25px; fill: #605e5c; }
.grid path { stroke: #d5d5d5; stroke-width: 2.5; stroke-dasharray: 2.5 9.1; fill: none; }
.lab { font-size: 25px; fill: #252423; }
.axl { font-size: 24.6px; fill: #252423; }
.end text { text-anchor: end; fill: #333; }
.mid text { text-anchor: middle; }
.dots { stroke: #605e5c; stroke-width: 4; stroke-dasharray: 3 2; fill: none; }

/* filters */
.filters { width: 453px; background: #fff; border-left: 2px solid #b3b0ad; flex: none; }
.f-head { display: flex; align-items: center; padding: 0 26px; height: 98px; }
.f-ic { margin-right: 17px; }
.f-title { font-size: 32px; font-weight: 700; flex: 1; color: #252423; }
.f-eye { margin-right: 50px; }
.f-search { margin: 19px 28px 0 18px; height: 68px; border: 2px solid #b3b0ad; border-radius: 4px; display: flex; align-items: center; padding: 0 0 2px 24px; gap: 24px; font-size: 26px; }
.f-sec { display: flex; justify-content: space-between; padding: 0 26px 0 18px; height: 40px; line-height: 40px; margin-top: 59px; font-size: 25.5px; }
.f-sec.first { border-top: 2px solid #b3b0ad; margin-top: 11px; padding-top: 33px; height: 73px; }
.dots3 { letter-spacing: 3px; }
.f-box { margin: 21px 19px 0 18px; height: 102px; border: 2px solid #c8c6c4; border-radius: 4px; display: flex; align-items: center; justify-content: center; font-size: 25.5px; padding-top: 2px; }

/* tabs */
.tabs { flex: none; height: 79px; display: flex; background: #f3f2f1; overflow: hidden; position: relative; }
.tab-nav { flex: none; width: 88px; display: flex; align-items: center; gap: 39px; padding-left: 10px; padding-top: 1px; }
.tab { flex: none; padding-left: 45px; line-height: 81px; font-size: 25.5px; white-space: nowrap; border-left: 2px solid #d2d0ce; color: #3b3a39; overflow: hidden; }
.tab.on { background: #fff; color: #252423; font-weight: 600; border-left-color: #a19f9d; box-shadow: inset 0 -9px 0 #f2c811; }
.t1 { width: 633px; } .t2 { width: 493px; } .t3 { width: 632px; } .t4 { width: 468px; } .t5 { width: 533px; }
.tab-add { flex: none; width: 88px; height: 72px; margin-top: 4px; background: #f2c811; display: flex; align-items: center; justify-content: center; }

/* viz */
.viz { flex: none; width: 407px; border-left: 2px solid #e1dfdd; border-right: 1px solid #e1dfdd; }
.p-head { height: 116px; display: flex; padding: 0 0 0 26px; position: relative; }
.p-title { font-size: 33px; font-weight: 600; color: #3b3a39; line-height: 114px; }
.p-chev { position: absolute; right: 27px; top: 37px; }
.vgrid { display: grid; grid-template-columns: repeat(6, 63px); grid-auto-rows: 54.3px; padding-left: 12px; height: 371px; border-bottom: 2px solid #e1dfdd; }
.vi { width: 38px; height: 37px; fill: none; stroke: #3b3a39; stroke-width: 1.6; overflow: visible; }
.bl { fill: #76b5ea; stroke: #1e74b4; }
.gr { fill: #b3b0ad; stroke: #797775; }
.wh { fill: #fafafa; stroke: #3b3a39; }
.whb { fill: #f7f7f7; stroke: #1e74b4; }
.st { stroke: #1e74b4; }
.or { fill: #f5b04e; stroke: #d86c12; }
.v123 { font-size: 18px; fill: #2b88c8; stroke: none; text-anchor: middle; }
.vr { font-size: 32px; font-weight: 700; fill: #2b7cad; stroke: none; text-anchor: middle; }
.vp { font-size: 29px; font-weight: 700; fill: #2b88c8; stroke: none; text-anchor: middle; }
.v-tabs { display: flex; padding: 19px 0 0 26px; height: 82px; }
.v-tab { width: 115px; height: 63px; }
.v-tab.on { width: 90px; padding-left: 22px; border-bottom: 9px solid #f2c811; border-radius: 0 0 4px 4px; margin-right: 25px; }
.v-label { margin: 7px 0 0 26px; height: 48px; line-height: 48px; font-size: 25px; }
.drop { margin: 5px 15px 0 9px; height: 62px; background: #fff; border: 2px dashed #c8c6c4; border-radius: 4px; padding-left: 22px; line-height: 58px; white-space: nowrap; font-size: 25.5px; }
.v-h2 { margin: 30px 0 0 31px; height: 50px; line-height: 50px; font-size: 33px; font-weight: 600; color: #3b3a39; }
.v-sub { margin: 28px 0 0 20px; height: 40px; line-height: 40px; font-size: 25px; }
.v-sub.s2 { margin-top: 40px; }
.toggle { display: flex; align-items: center; margin: 24px 0 0 40px; height: 40px; gap: 9px; }
.d2 { height: 57px; line-height: 53px; padding-left: 18px; margin-top: 31px; font-size: 25.5px; }

/* fields */
.fields { flex: none; width: 404px; border-left: 2px solid #e1dfdd; background: #f4f3f2; display: flex; flex-direction: column; min-height: 0; }
.fh { height: 109px; padding-left: 28px; flex: none; }
.fh .p-chev { right: 25px; }
.fsearch { margin: 0 8px 0 9px; height: 58px; background: #fff; border: 2px solid #797775; border-radius: 4px; display: flex; align-items: center; padding-left: 17px; gap: 14px; font-size: 28px; color: #3b3a39; flex: none; }
.flist { flex: 1; min-height: 0; position: relative; overflow: hidden; margin-top: 15px; border-top: 2px solid #e1dfdd; padding-top: 20px; }
.fr { height: 54px; display: flex; align-items: center; padding-left: 56px; font-size: 25.5px; white-space: nowrap; color: #252423; }
.ch { width: 30px; flex: none; }
.cb { width: 27px; height: 26px; flex: none; border: 2px solid #8a8886; border-radius: 4px; }
.fi { width: 22px; margin-left: 20px; margin-right: 14px; flex: none; }
.tbl { padding-left: 16px; }
.tch { width: 26px; }
.tic { margin-left: 8px; margin-right: 13px; }
.scroll { position: absolute; left: 377px; top: 163px; width: 18px; height: 1294px; background: #c8c8c8; }

/* status */
.status { flex: none; height: 44px; border-top: 2px solid #e1dfdd; padding-left: 12px; line-height: 46px; font-size: 26px; color: #3b3a39; }
```
